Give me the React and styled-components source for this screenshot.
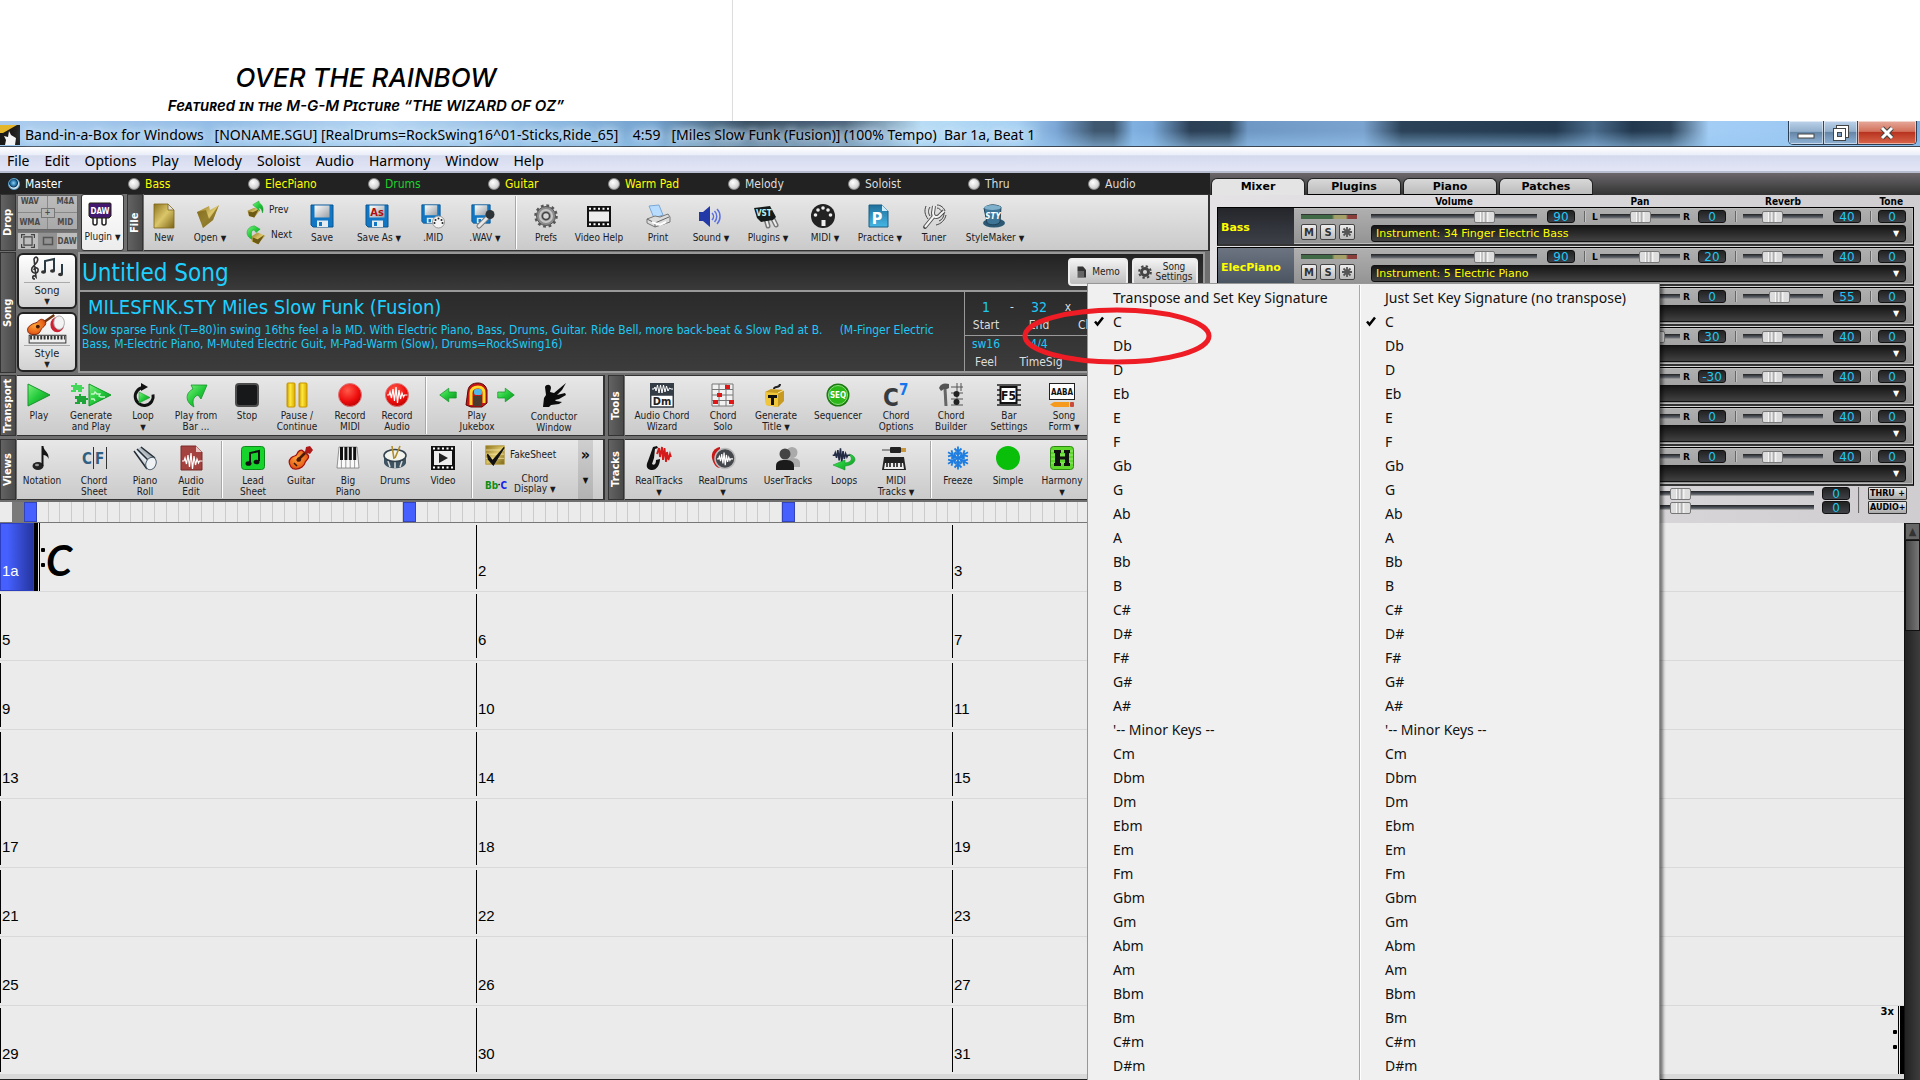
import React from "react";
import styled, { createGlobalStyle } from "styled-components";

const GlobalStyle = createGlobalStyle`
  * {
    box-sizing: border-box;
  }
  body {
    background: #fff;
    margin: 0;
  }
  button, input, select {
    font: inherit;
    color: inherit;
    margin: 0;
  }
  button {
    background: none;
    border: 0;
    padding: 0;
  }
`;

const tahoma = `"DejaVu Sans Condensed", "DejaVu Sans", sans-serif`;
const verdana = `"DejaVu Sans", sans-serif`;
const segoe = `"Noto Sans", "Open Sans", sans-serif`;

/* ---------- page ---------- */

const Page = styled.div`
  display: flex;
  flex-direction: column;
  font-family: ${tahoma};
  height: 100vh;
  overflow: hidden;
  position: relative;
`;

const SheetHeader = styled.header`
  display: flex;
  flex: none;
  height: 121px;
`;

const SheetTitle = styled.div`
  align-items: center;
  border-right: 1px solid #ddd;
  display: flex;
  flex-direction: column;
  font-family: "Inter", sans-serif;
  font-style: italic;
  font-weight: 500;
  justify-content: flex-end;
  padding-bottom: 3px;
  width: 733px;
`;

const SongName = styled.h1`
  font-size: 26px;
  font-weight: 500;
  line-height: 32px;
  margin: 0;
`;

const SongCredit = styled.p`
  font-size: 15px;
  font-variant: small-caps;
  font-weight: 600;
  line-height: 24px;
  margin: 0;
`;

const TitleBar = styled.div`
  align-items: center;
  background:
    linear-gradient(180deg, rgba(255, 255, 255, 0) 40%, rgba(150, 200, 240, 0.55) 100%),
    linear-gradient(90deg, #a9cbee 0%, #8fbae6 12%, #b5d5f3 20%, #8db9e3 28%, #6fa0cf 34%, #31475c 39%, #47617c 44%,
      #b7dcf5 48%, #a5d0f3 53%, #7ba6d6 55%, #3f5870 57%, #3f5870 58%, #7fb0e0 59%, #7aa9d9 60%, #2b3f55 62%,
      #2d4459 64%, #6f98c4 65%, #7ba3cf 71%, #2b4258 73%, #233a50 81%, #4a6b8c 83%, #22384e 85%, #2b4258 87%,
      #a3cdf5 89%, #9bc8f3 94%, #7fb0e4 100%);
  border-bottom: 1px solid #3a4654;
  display: flex;
  flex: none;
  font-family: ${segoe};
  font-size: 14px;
  height: 26px;
  justify-content: space-between;
`;

const TitleText = styled.div`
  align-items: center;
  display: flex;
  gap: 5px;
  padding-top: 2px;
  text-shadow: 0 0 6px #cfe6fa, 0 0 10px #cfe6fa, 0 0 14px #cfe6fa, 0 0 18px #cfe6fa;
  white-space: pre;
`;

const WindowButtons = styled.div`
  align-self: flex-start;
  border: 1px solid #2d3f54;
  border-radius: 0 0 5px 5px;
  border-top: 0;
  display: flex;
  margin-right: 3px;
  overflow: hidden;
`;

const WindowButton = styled.button`
  align-items: center;
  background: ${(p) =>
    p.$close
      ? "linear-gradient(#e6a99b 0%, #d2725c 45%, #b83420 50%, #d9664a 100%)"
      : "linear-gradient(#bcd3ea 0%, #93afcc 45%, #6686a8 50%, #8fb2d4 100%)"};
  border-left: ${(p) => (p.$first ? "0" : "1px solid #34475c")};
  box-shadow: inset 0 0 0 1px rgba(255, 255, 255, 0.5);
  display: flex;
  height: 23px;
  justify-content: center;
  width: ${(p) => (p.$close ? "59px" : "34px")};
`;

const MenuBar = styled.nav`
  align-items: center;
  background: linear-gradient(#fff 0%, #e9edf8 34%, #d5daed 36%, #e0e4f5 90%);
  border-bottom: 2px solid #b9bdd0;
  display: flex;
  flex: none;
  font-family: ${segoe};
  font-size: 14px;
  gap: 15px;
  height: 26px;
  padding: 2px 7px 0;
`;

const Workspace = styled.div`
  display: flex;
  flex: none;
`;

const Left = styled.div`
  background: #6f6f6f;
  display: flex;
  flex: 1;
  flex-direction: column;
  min-width: 0;
`;

/* ---------- track selector ---------- */

const TrackBar = styled.div`
  background: #222;
  display: grid;
  grid-template-columns: repeat(9, 120px) 1fr;
  height: 21px;
  padding-left: 8px;
`;

const TrackLabel = styled.label`
  align-items: center;
  color: ${(p) => p.$color};
  display: flex;
  font-size: 12px;
  gap: 5px;
`;

const TrackRadio = styled.input`
  appearance: none;
  background: radial-gradient(circle at 40% 35%, #fff 0%, #ddd 50%, #aaa 100%);
  border: 1px solid #888;
  border-radius: 50%;
  height: 12px;
  width: 12px;

  &:checked {
    background: radial-gradient(circle at 45% 40%, #8fd0f5 0%, #2473a8 35%, #123b5c 50%, #d6e6f0 60%);
    border-color: #5fa3cc;
  }
`;

/* ---------- toolbars ---------- */

const ToolRow = styled.div`
  display: flex;
  gap: 1px;
  height: ${(p) => p.$height};
  margin-bottom: ${(p) => p.$gap};
`;

const SideLabel = styled.div`
  align-items: center;
  background: linear-gradient(90deg, #4a4a4a, #636363);
  border: 1px solid #333;
  color: #fff;
  display: flex;
  flex: none;
  font-family: ${verdana};
  font-size: 10px;
  font-weight: bold;
  justify-content: center;
  line-height: 14px;
  transform: rotate(180deg);
  width: 16px;
  writing-mode: vertical-rl;
`;

const Panel = styled.div`
  background: linear-gradient(#e8e8e8, #cacaca);
  border: 1px solid #333;
  border-left: 0;
  border-right: ${(p) => (p.$open ? "0" : "2px solid #333")};
  display: flex;
  flex: ${(p) => (p.$width ? "none" : 1)};
  margin-right: ${(p) => p.$after || "0"};
  min-width: 0;
  overflow: hidden;
  width: ${(p) => p.$width || "auto"};
`;

const ToolButton = styled.button`
  align-items: center;
  color: #1b1b1f;
  display: flex;
  flex: none;
  flex-direction: column;
  font-size: 10px;
  gap: ${(p) => p.$gap || "3px"};
  line-height: 11px;
  padding-top: ${(p) => p.$top || "7px"};
  text-align: center;
  white-space: pre-line;
  width: ${(p) => p.$w}px;
`;

const IconSlot = styled.span`
  display: flex;
  gap: 8px;
  height: 26px;
  align-items: center;
  padding-right: ${(p) => (p.$arrow ? "5px" : "0")};
`;

const Arrow = styled.span`
  font-size: 8px;
`;

const Separator = styled.div`
  background: #a8a8a8;
  border-right: 1px solid #fff;
  flex: none;
  margin: 1px ${(p) => p.$right || "4px"} 1px ${(p) => p.$left || "4px"};
  width: 2px;
`;

const SideBySide = styled.div`
  display: flex;
  flex: none;
  flex-direction: column;
  justify-content: space-between;
  padding: 4px 0;
  width: ${(p) => p.$w}px;
`;

const InlineTool = styled.button`
  align-items: center;
  color: #1b1b1f;
  display: flex;
  font-size: 10px;
  gap: 5px;
  line-height: 10px;
  min-height: 22px;
  padding-left: 10px;
  white-space: pre-line;
`;

const OverflowColumn = styled.button`
  align-items: center;
  background: linear-gradient(#cfcfcf, #b2b2b2);
  color: #111;
  display: flex;
  flex: none;
  flex-direction: column;
  font-size: 16px;
  gap: 8px;
  justify-content: center;
  line-height: 18px;
  padding-bottom: 4px;
  width: 15px;
`;

const DropPanel = styled.div`
  color: #4a4a4a;
  display: flex;
  flex: none;
  flex-direction: column;
  font-size: 8px;
  font-weight: bold;
  gap: 2px;
  padding: 1px 2px 1px 0;
  width: 63px;
`;

const DropTargets = styled.div`
  align-content: space-between;
  background:
    linear-gradient(#888, #888) center / 1px 100% no-repeat,
    linear-gradient(#888, #888) center / 100% 1px no-repeat,
    linear-gradient(#bcbcbc, #a9a9a9);
  border: 1px solid #666;
  display: grid;
  flex: 1;
  grid-template-columns: 1fr 14px 1fr;
  line-height: 10px;
  padding: 1px;
  text-align: center;
`;

const DropPlus = styled.div`
  background: #b4b4b4;
  border: 1px solid #777;
  grid-column: 2;
  line-height: 8px;
`;

const DropModes = styled.div`
  background: #a4a4a4;
  border: 1px solid #777;
  display: flex;
  height: 18px;
`;

const DropMode = styled.button`
  align-items: center;
  background: ${(p) => (p.$lit ? "#bdbdbd" : "#929292")};
  display: flex;
  flex: 1;
  justify-content: center;
`;

const PluginButton = styled(ToolButton)`
  background: linear-gradient(#fff, #ececec);
  border: 1px solid #333;
  border-radius: 3px;
  margin-right: 2px;
  padding-top: 7px;
`;

/* ---------- song panel ---------- */

const SongButtons = styled.div`
  display: flex;
  flex: none;
  flex-direction: column;
  gap: 3px;
  padding: 1px 0;
  width: 60px;
`;

const SongButton = styled.button`
  align-items: center;
  background: linear-gradient(#fff, #d2d2d2);
  border: 2px solid #222;
  border-radius: 6px;
  color: #222;
  display: flex;
  flex: 1;
  flex-direction: column;
  font-size: 11px;
  justify-content: center;
  line-height: 11px;
`;

const SongRule = styled.hr`
  border: 0;
  border-top: 1px solid #aaa;
  margin: 2px 0;
  width: 46px;
`;

const SongScreen = styled.div`
  background: linear-gradient(#222, #3c3c3c);
  border: 2px solid #999;
  display: flex;
  flex: 1;
  flex-direction: column;
  margin-right: 5px;
  min-width: 0;
`;

const SongTitleRow = styled.div`
  align-items: center;
  background: linear-gradient(#222, #3a3a3a);
  border-bottom: 2px solid #999;
  display: flex;
  flex: none;
  gap: 4px;
  height: 38px;
  padding: 0 5px 0 2px;
`;

const SongTitle = styled.h2`
  color: #1fd0ff;
  flex: 1;
  font-size: 24px;
  font-weight: normal;
  line-height: 30px;
  margin: 2px 0 0;
`;

const SettingsButton = styled.button`
  align-items: center;
  background: linear-gradient(#f2f2f2, #bdbdbd);
  border: 2px solid #eee;
  border-radius: 4px;
  color: #222;
  display: flex;
  font-size: 10px;
  gap: 4px;
  height: 28px;
  justify-content: center;
  line-height: 10px;
  white-space: pre-line;
  width: ${(p) => p.$w};
`;

const SongInfoRow = styled.div`
  display: flex;
  flex: 1;
  min-height: 0;
`;

const StyleInfo = styled.div`
  color: #1fc8f4;
  flex: 1;
  font-size: 12px;
  line-height: 14px;
  padding: 3px 2px;
  white-space: pre-line;
`;

const StyleName = styled.h3`
  color: #1fd0ff;
  font-size: 20px;
  font-weight: normal;
  line-height: 24px;
  margin: 0 0 4px 6px;
`;

const Form = styled.div`
  border-left: 1px solid #999;
  display: flex;
  flex: none;
  flex-direction: column;
  width: 239px;
`;

const FormLine = styled.div`
  border-bottom: ${(p) => (p.$top ? "1px solid #999" : "0")};
  display: grid;
  flex: ${(p) => (p.$top ? "0 0 44px" : 1)};
  grid-template-columns: 42px 10px 44px 14px 44px 1fr;
  line-height: 16px;
  padding-top: ${(p) => (p.$top ? "7px" : "0")};
  text-align: center;
`;

const FormValue = styled.span`
  color: #1fc8f4;
  font-size: ${(p) => (p.$big ? "14px" : "12px")};
`;

const FormLabel = styled.span`
  color: #ddd;
  font-size: 12px;
  grid-column: ${(p) => p.$col || "auto"};
`;

/* ---------- ruler ---------- */

const Ruler = styled.div`
  background: #7a7a7a;
  border-bottom: 1px solid #777;
  display: flex;
  height: 21px;
`;

const RulerStart = styled.div`
  background: #ebebeb;
  margin-right: 12px;
  width: 12px;
`;

const RulerCell = styled.div`
  background: ${(p) => (p.$section ? "#4560ff" : "#ebebeb")};
  border: ${(p) => (p.$section ? "1px solid #3344bb" : "0 solid #cbcbcb")};
  border-right-width: 1px;
  flex: 1;
`;

/* ---------- mixer ---------- */

const Mixer = styled.aside`
  background: linear-gradient(90deg, #e4e2e4, #cfcdcf);
  color: #000;
  display: flex;
  flex: none;
  flex-direction: column;
  font-family: ${verdana};
  width: 710px;
`;

const Tabs = styled.div`
  align-items: flex-end;
  background: linear-gradient(#6b676b, #333);
  display: flex;
  gap: 2px;
  height: 22px;
  padding-left: 1px;
`;

const Tab = styled.button`
  background: ${(p) => (p.$active ? "#e4e4e4" : "linear-gradient(#d8d8d8, #bcbcbc)")};
  border: 1px solid #222;
  border-bottom: ${(p) => (p.$active ? "0" : "1px solid #000")};
  border-radius: 6px 6px 0 0;
  font-size: 11px;
  font-weight: bold;
  height: 17px;
  line-height: 14px;
  width: 94px;
`;

const ColumnHeads = styled.div`
  display: grid;
  font-family: ${tahoma};
  font-size: 10px;
  font-weight: bold;
  grid-template-columns: 154px 166px 63px 80px 63px 80px 1fr;
  height: 12px;
  line-height: 14px;
  padding: 0 17px 0 7px;
  text-align: center;
`;

const ToneHead = styled.span`
  text-align: right;
`;

const Strip = styled.div`
  background: linear-gradient(#b0b0b0, #939393);
  border: 1px solid #000;
  border-bottom: 2px solid #333;
  box-shadow: inset 0 0 0 1px #bbb;
  display: flex;
  height: 39px;
  margin: 0 6px 1px 7px;
`;

const StripName = styled.div`
  align-items: center;
  background: ${(p) => (p.$lit ? "linear-gradient(#6b7480, #4a5360)" : "linear-gradient(#24262b, #3d4048)")};
  color: #ff0;
  display: flex;
  font-size: 11px;
  font-weight: bold;
  padding: 2px 0 0 3px;
  width: 76px;
`;

const MeterCell = styled.div`
  display: flex;
  flex-direction: column;
  gap: 5px;
  padding: 6px 14px 0 7px;
  width: 77px;
`;

const Meter = styled.div`
  background: linear-gradient(90deg, #3f6a45 0 55%, #a3a06a 60% 80%, #8a3f3c 84%);
  border-top: 1px solid #333;
  height: 5px;
`;

const MeterButtons = styled.div`
  display: flex;
  gap: 3px;
`;

const MeterButton = styled.button`
  align-items: center;
  background: linear-gradient(#eee, #bbb);
  border: 1px solid #444;
  border-radius: 2px;
  color: #333;
  display: flex;
  font-size: 10px;
  font-weight: bold;
  height: 16px;
  justify-content: center;
  width: 16px;
`;

const StripControls = styled.div`
  display: flex;
  flex: 1;
  flex-direction: column;
  gap: 2px;
  padding: 2px 7px 0 0;
`;

const StripLine = styled.div`
  align-items: center;
  display: grid;
  grid-template-columns: 176px 37px 8px 8px 80px 18px 37px 8px 90px 37px 8px 28px;
`;

const Fader = styled.input`
  appearance: none;
  background: linear-gradient(transparent 4px, #222 4px, #555b66 7px, #777 8px, transparent 9px);
  flex: none;
  height: 13px;
  width: ${(p) => p.$w};

  &::-webkit-slider-thumb {
    appearance: none;
    background: linear-gradient(90deg, #ddd 0 25%, #fff 30%, #aaa 36%, #f5f5f5 46%, #aaa 56%, #f5f5f5 66%, #ddd 75% 100%);
    border: 1px solid #777;
    border-radius: 2px;
    height: 12px;
    width: 21px;
  }
`;

const Readout = styled.output`
  background: linear-gradient(#222, #3f4247);
  border: 1px solid #111;
  border-radius: 3px;
  color: #1fc8f4;
  font-size: 12px;
  height: 13px;
  line-height: 12px;
  text-align: center;
  width: 28px;
`;

const Tick = styled.span`
  background: #666;
  border-right: 1px solid #c4c4c4;
  height: ${(p) => p.$tall || "11px"};
  width: 2px;
`;

const PanMark = styled.span`
  font-size: 9px;
  font-weight: bold;
  padding-left: ${(p) => p.$pad || "0"};
`;

const Instrument = styled.select`
  appearance: none;
  background: linear-gradient(#161616, #414141);
  border: 1px solid #111;
  border-radius: 3px;
  color: #ff0;
  font-size: 11px;
  height: 17px;
  line-height: 15px;
  padding: 0 4px;
  width: 100%;
`;

const InstrumentBox = styled.label`
  display: grid;
  grid-template-columns: 1fr 13px;

  & > select {
    grid-column: 1 / 3;
    grid-row: 1;
  }
`;

const InstrumentArrow = styled.span`
  color: #fff;
  font-size: 8px;
  grid-column: 2;
  grid-row: 1;
  line-height: 17px;
  pointer-events: none;
`;

const MixerFoot = styled.div`
  display: flex;
  gap: 8px;
  height: 36px;
  justify-content: flex-end;
  padding-right: 13px;
`;

const FootColumn = styled.div`
  display: flex;
  flex-direction: column;
  gap: 1px;
`;

const FootButton = styled.button`
  background: linear-gradient(#e8e8e8, #a9a9a9);
  border: 1px solid #333;
  border-radius: 1px;
  display: flex;
  font-size: 8px;
  font-weight: bold;
  height: 13px;
  justify-content: space-between;
  line-height: 12px;
  padding: 0 1px;
  white-space: nowrap;
  width: 39px;
`;

/* ---------- chord sheet ---------- */

const SheetArea = styled.main`
  background: #ebebeb;
  display: flex;
  flex: 1;
  min-height: 0;
`;

const Bars = styled.div`
  display: flex;
  flex: 1;
  flex-direction: column;
`;

const BarRow = styled.div`
  border-bottom: 1px solid #d9d9d9;
  display: grid;
  flex: none;
  grid-template-columns: repeat(4, 1fr);
  height: 69px;
`;

const Bar = styled.div`
  align-items: flex-end;
  border-left: 1px solid #000;
  display: flex;
  font-family: "Liberation Sans", sans-serif;
  font-size: 15px;
  justify-content: space-between;
  line-height: 18px;
  margin: 2px 0;
  padding: 0 0 9px 1px;
`;

const FirstBar = styled.div`
  display: flex;
`;

const BarNumber = styled.div`
  align-items: flex-end;
  background: linear-gradient(90deg, #4560ff 20%, #26359e);
  border: 1px solid #2c3fc0;
  color: #fff;
  display: flex;
  font-family: "Liberation Sans", sans-serif;
  font-size: 15px;
  line-height: 18px;
  padding: 0 0 10px 1px;
  width: 34px;
`;

const RepeatLines = styled.div`
  border-left: ${(p) => (p.$end ? "1px" : "4px")} solid #000;
  border-right: ${(p) => (p.$end ? "4px" : "1px")} solid #000;
  width: 6px;
`;

const RepeatDots = styled.div`
  display: flex;
  flex: none;
  flex-direction: column;
  gap: 11px;
  justify-content: center;
  padding: 0 1px;

  &::before,
  &::after {
    background: #000;
    border-radius: 1px;
    content: "";
    height: 4px;
    width: 4px;
  }
`;

const Chord = styled.span`
  align-self: center;
  font-family: "Lato", sans-serif;
  font-size: 42px;
  font-style: italic;
  font-weight: bold;
  line-height: 44px;
  padding-top: 6px;
`;

const EndRepeat = styled.div`
  align-self: stretch;
  display: flex;
  margin: -2px 0 -11px;
`;

const EndMarks = styled.div`
  align-items: flex-end;
  display: flex;
  flex-direction: column;
  gap: 14px;
`;

const RepeatCount = styled.span`
  font-family: ${verdana};
  font-size: 10px;
  font-weight: bold;
  height: 10px;
  line-height: 11px;
  padding-right: 4px;
`;

const SheetFoot = styled.div`
  background: #d9d9d9;
  border-bottom: 1px solid #222;
  flex: 1;
`;

const ScrollTrack = styled.div`
  background: linear-gradient(90deg, #222, #3d3d3d);
  border-left: 1px solid #111;
  flex: none;
  width: 16px;
`;

const ScrollUp = styled.button`
  background: #666;
  border: 1px solid #222;
  color: #333;
  display: block;
  font-size: 11px;
  height: 17px;
  line-height: 14px;
  width: 15px;
`;

const ScrollThumb = styled.div`
  background: linear-gradient(90deg, #444, #777);
  border: 1px solid #111;
  height: 91px;
`;

/* ---------- key menu ---------- */

const KeyMenu = styled.div`
  background: #f0f0f0;
  border: 1px solid #979797;
  box-shadow: 3px 3px 3px rgba(0, 0, 0, 0.5);
  display: flex;
  font-family: ${segoe};
  font-size: 14px;
  padding-top: 1px;
  position: absolute;
  right: 260px;
  top: 283px;
`;

const KeyColumn = styled.div`
  display: flex;
  flex-direction: column;
  padding-bottom: 8px;
  width: ${(p) => p.$w};

  & + & {
    border-left: 1px solid #a8a8a8;
    box-shadow: inset 1px 0 0 #fff;
  }
`;

const KeyItem = styled.button`
  align-items: center;
  color: #111;
  display: grid;
  grid-template-columns: 25px 1fr;
  height: 24px;
  text-align: left;
`;

const Check = styled.svg`
  grid-column: 1;
  margin-left: 5px;
`;

const KeyText = styled.span`
  grid-column: 2;
`;

const Ellipse = styled.svg`
  left: -68px;
  pointer-events: none;
  position: absolute;
  top: 21px;
`;

/* ---------- icons ---------- */

const IconSvg = styled.svg`
  flex: none;
  overflow: visible;
`;

const Defs = () => (
  <svg width="0" height="0" aria-hidden="true">
    <defs>
      <linearGradient id="green" x1="0" y1="0" x2="1" y2="1">
        <stop offset="0" stopColor="#7df27d" />
        <stop offset="0.5" stopColor="#22c93a" />
        <stop offset="1" stopColor="#128a22" />
      </linearGradient>
      <linearGradient id="gold" x1="0" y1="0" x2="1" y2="1">
        <stop offset="0" stopColor="#8d7420" />
        <stop offset="0.5" stopColor="#dcc66a" />
        <stop offset="1" stopColor="#7a6416" />
      </linearGradient>
      <linearGradient id="silver" x1="0" y1="0" x2="1" y2="1">
        <stop offset="0" stopColor="#fff" />
        <stop offset="1" stopColor="#9aa0a6" />
      </linearGradient>
      <linearGradient id="yellow" x1="0" y1="0" x2="1" y2="0">
        <stop offset="0" stopColor="#c99a00" />
        <stop offset="0.4" stopColor="#ffe93c" />
        <stop offset="1" stopColor="#d9a800" />
      </linearGradient>
      <linearGradient id="steel" x1="0" y1="1" x2="1" y2="0">
        <stop offset="0" stopColor="#3c4750" />
        <stop offset="0.45" stopColor="#e6ecf0" />
        <stop offset="1" stopColor="#39434c" />
      </linearGradient>
      <radialGradient id="red" cx="0.4" cy="0.3" r="0.8">
        <stop offset="0" stopColor="#ff5a4a" />
        <stop offset="0.6" stopColor="#ee0d0d" />
        <stop offset="1" stopColor="#a00" />
      </radialGradient>
      <radialGradient id="wood" cx="0.4" cy="0.4" r="0.8">
        <stop offset="0" stopColor="#ffa53c" />
        <stop offset="0.6" stopColor="#e8631a" />
        <stop offset="1" stopColor="#8b2508" />
      </radialGradient>
      <linearGradient id="page" x1="0" y1="0" x2="0" y2="1">
        <stop offset="0" stopColor="#1f6f9a" />
        <stop offset="1" stopColor="#45b7e6" />
      </linearGradient>
    </defs>
  </svg>
);

const Floppy = ({ s = 24 }) => (
  <g transform={`scale(${s / 24})`}>
    <path d="M1 1h22v22H3l-2-2z" fill="#1177c4" stroke="#0b5590" />
    <path d="M4.500 1.500h15v12h-15z" fill="url(#silver)" />
    <path d="M7 16.500h11v6.500H7z" fill="#e4ecf2" />
    <path d="M9 18h3v4H9z" fill="#1177c4" />
  </g>
);

const wave = "M2 12h2l1-3 1.500 6 1.500-9 1.500 12 1.500-14 1.500 16 1.500-13 1.500 9 1.500-6 1.500 4 1-2h3";

const GuitarShape = () => (
  <>
    <path d="M12 12l8-8" stroke="#6b3410" strokeWidth="3" />
    <path d="M16 6l1-5 4-1 3 4-3 4z" fill="#b01818" />
    <path
      d="M2 12c3-3 5-1 6-4s4-5 6-3l5 4c2 2 0 4-2 6s0 3-4 6-9 3-11 0-3-6 0-9z"
      fill="url(#wood)"
      stroke="#a11212"
      strokeWidth="1.200"
    />
    <path d="M8 15l8-8" stroke="#4a1906" strokeWidth="2.500" />
    <circle cx="10" cy="13.500" r="2.200" fill="#4a1906" />
    <path d="M5 17l3 3" stroke="#3a1404" strokeWidth="1.500" />
  </>
);

const keySlots = [4, 8.4, 12.8, 17.2];

const shapes = {
  plugin: (
    <>
      <path d="M5 13v7a2 2 0 0 0 4 0v-7M14 13v7a2 2 0 0 0 4 0v-7" fill="#fff" stroke="#222" strokeWidth="1.500" />
      <path d="M2 0h20a1 1 0 0 1 1 1v12l-2 2H3l-2-2V1a1 1 0 0 1 1-1z" fill="#43166f" stroke="#221" />
      <text x="12" y="11" textAnchor="middle" fontSize="8" fontWeight="bold" fill="#fff">DAW</text>
    </>
  ),
  new: <path d="M2 0h14l6 6v18H2zM16 0v6h6" fill="url(#gold)" stroke="#7d6618" strokeWidth="0.800" />,
  open: (
    <>
      <path d="M1 8L13 2l1 4 9-5-6 15L7 24z" fill="url(#gold)" />
      <path d="M1 8l9-2 3 9 10-14-6 15L7 24z" fill="#7c681c" opacity="0.75" />
    </>
  ),
  prev: (
    <>
      <path d="M2 13l9-4 8 3-8 10-7-2z" fill="url(#gold)" />
      <path d="M3 14l6 1 8-4-6 11-7-2z" fill="#6d5a14" />
      <path d="M9 5l8-5 1 3c4 2 6 7 4 13-1-5-3-7-5-7l1 4z" fill="url(#green)" stroke="#13a52a" strokeWidth="0.600" />
    </>
  ),
  next: (
    <>
      <path d="M6 14l8-5 9 4-9 10-7-3z" fill="url(#gold)" />
      <path d="M8 15l6 2 8-5-7 11-7-3z" fill="#6d5a14" />
      <path d="M12 9l-2-3C6 6 6 10 7 17 0 14-1 6 6 2l4-1 7 4z" fill="url(#green)" stroke="#13a52a" strokeWidth="0.600" />
    </>
  ),
  save: <Floppy />,
  saveAs: (
    <>
      <Floppy />
      <text x="12" y="12" textAnchor="middle" fontSize="11" fontWeight="bold" fill="#b01010">As</text>
    </>
  ),
  mid: (
    <>
      <Floppy s={20} />
      <circle cx="17.500" cy="18" r="6" fill="#f4f4f4" stroke="#999" />
      <g fill="#222">
        <circle cx="13.500" cy="19" r="1" /><circle cx="14.500" cy="16" r="1" /><circle cx="17.500" cy="14.500" r="1" />
        <circle cx="20.500" cy="16" r="1" /><circle cx="21.500" cy="19" r="1" />
      </g>
    </>
  ),
  wav: (
    <>
      <Floppy s={20} />
      <path d="M8 22L18 12" stroke="#777" strokeWidth="5" strokeLinecap="round" />
      <path d="M8 22L18 12" stroke="#e8e8e8" strokeWidth="3" strokeLinecap="round" />
      <circle cx="19" cy="10.500" r="4.500" fill="#2e3338" />
    </>
  ),
  prefs: (
    <>
      <circle cx="12" cy="12" r="10.500" fill="none" stroke="#555" strokeWidth="2.500" strokeDasharray="2.750 2.750" />
      <circle cx="12" cy="12" r="9.500" fill="#8c8c8e" stroke="#555" />
      <circle cx="12" cy="12" r="6" fill="none" stroke="#c6c6c6" strokeWidth="2" />
      <circle cx="12" cy="12" r="3.500" fill="#d5d5d5" stroke="#444" strokeWidth="1.500" />
    </>
  ),
  film: (
    <>
      <rect x="0" y="2" width="24" height="21" fill="#111" />
      <rect x="2" y="7.500" width="20" height="10" fill="#eee" />
      <path d="M2 4.750h20M2 20.250h20" stroke="#fff" strokeWidth="2" strokeDasharray="2 2.500" />
    </>
  ),
  video: (
    <>
      <rect x="0" y="0" width="24" height="24" fill="#111" />
      <rect x="3" y="5" width="18" height="14" fill="#eee" />
      <path d="M2 2.500h20M2 21.500h20" stroke="#fff" strokeWidth="2" strokeDasharray="2 2.500" />
      <path d="M8 7l9 5-9 5z" fill="#222" />
    </>
  ),
  print: (
    <>
      <path d="M3 2l10-1 4 10-9 3z" fill="#b7dcff" stroke="#7aa8d8" />
      <path d="M1 15l8-3 5 1 8-3 2 3v5L9 23l-8-4z" fill="#dcdcdc" stroke="#777" />
      <path d="M1 15l8 4 14-6M9 19v4" fill="none" stroke="#666" />
      <path d="M6 18l8 3 6-3" fill="none" stroke="#fff" strokeWidth="2" />
    </>
  ),
  sound: (
    <>
      <path d="M2 8h4l7-6v21l-7-6H2z" fill="#2439a8" />
      <path d="M15 9c2 2 2 5 0 7M17.500 7c3 3 3 8 0 11M20 5c4 4 4 11 0 15" fill="none" stroke="#5b6fe0" strokeWidth="1.500" />
    </>
  ),
  vst: (
    <>
      <path d="M12 15l2 7M18 13l4 8" stroke="#777" strokeWidth="5" strokeLinecap="round" />
      <path d="M12 15l2 7M18 13l4 8" stroke="#eee" strokeWidth="2" strokeLinecap="round" />
      <path d="M0 4l16-2 6 11-3 3-12 2-4-4z" fill="#151a1a" />
      <text x="2" y="12" fontSize="8" fontWeight="bold" fill="#bff0ec">VST</text>
    </>
  ),
  midi: (
    <>
      <circle cx="12" cy="12" r="12" fill="#222" />
      <g fill="#eee">
        <circle cx="4.500" cy="11" r="1.800" /><circle cx="7" cy="6" r="1.800" /><circle cx="12" cy="4" r="1.800" />
        <circle cx="17" cy="6" r="1.800" /><circle cx="19.500" cy="11" r="1.800" />
        <rect x="10.500" y="16" width="4" height="6" />
      </g>
    </>
  ),
  practice: (
    <>
      <path d="M3 1h13l6 6v16H3z" fill="url(#page)" stroke="#1b5f85" />
      <path d="M16 1v6h6z" fill="#cfeefc" />
      <text x="11" y="20" textAnchor="middle" fontSize="16" fontWeight="bold" fill="#fff">P</text>
    </>
  ),
  tuner: (
    <>
      <path d="M3 23l9-11" stroke="#555" strokeWidth="4" strokeLinecap="round" />
      <path d="M12 2l-1 7c0 4 3 5 6 3l5-5" fill="none" stroke="#555" strokeWidth="4" />
      <path d="M3 23l9-11M12 2l-1 7c0 4 3 5 6 3l5-5" fill="none" stroke="#f4f4f4" strokeWidth="2" />
      <path d="M15 1c4 0 7 3 8 6M15 4c2 0 4 2 5 4M17 17c3-1 5-4 5-8M14 21c5-1 9-5 10-10M8 3C6 6 6 9 8 12M4 2c-2 5-1 9 2 13" fill="none" stroke="#444" />
    </>
  ),
  hat: (
    <>
      <ellipse cx="13" cy="19" rx="11" ry="4.500" fill="#2c5874" />
      <path d="M3 4l3 15c4 3 11 2 13-1l1-15c-5-3-13-3-17 1z" fill="#3e7596" stroke="#1f4257" />
      <ellipse cx="11.500" cy="3.500" rx="8.500" ry="2.500" fill="#7fb0cb" />
      <text x="12" y="15" textAnchor="middle" fontSize="8" fontWeight="bold" fontStyle="italic" fill="#fff">STY</text>
    </>
  ),
  play: <path d="M1 1l22 11L1 23z" fill="url(#green)" stroke="#14952a" />,
  generate: (
    <>
      <path d="M18 1l22 11-22 11z" fill="url(#green)" stroke="#14952a" />
      <path d="M20 11h3l1-2 2 2h3l-1 2 2 1h4M20 16h3l1 2" fill="none" stroke="#c9f7cc" strokeWidth="1.400" />
      <path d="M0 2h4v-2h2v2h5v2h2v2h-2v3H7V7H5v2H0V7h2V4H0z" fill="#44d85a" />
      <path d="M4 13h4v-2h2v2h5v2h2v2h-2v4h-4v-2h-2v2H4v-2h2v-3H4z" fill="#1fa437" />
    </>
  ),
  loop: (
    <>
      <path d="M12 4.500a9 9 0 1 0 10 7" fill="none" stroke="#111" strokeWidth="3" />
      <path d="M10 0l7 4-7 4z" fill="#111" />
      <path d="M8 9l11 5.500L8 20z" fill="url(#green)" stroke="#14952a" strokeWidth="0.600" />
    </>
  ),
  playFrom: (
    <path d="M7 2l16 0-6 14-3-4c-5 2-6 6-4 12C1 19 1 10 9 6z" fill="url(#green)" stroke="#14952a" strokeWidth="0.800" />
  ),
  stop: <rect x="1" y="1" width="22" height="22" rx="3" fill="#17181a" stroke="#4c4c4c" strokeWidth="2" />,
  pause: (
    <>
      <rect x="2" y="0" width="8" height="24" rx="1" fill="url(#yellow)" stroke="#c79500" />
      <rect x="14" y="0" width="8" height="24" rx="1" fill="url(#yellow)" stroke="#c79500" />
    </>
  ),
  record: <circle cx="12" cy="12" r="11.500" fill="url(#red)" stroke="#d77" />,
  recordAudio: (
    <>
      <circle cx="12" cy="12" r="11.500" fill="url(#red)" stroke="#d77" />
      <path d={wave} fill="none" stroke="#fff" strokeWidth="1.200" />
    </>
  ),
  arrowLeft: <path d="M1 12L13 3v5h10v8H13v5z" fill="url(#green)" stroke="#14952a" />,
  arrowRight: <path d="M23 12L11 3v5H1v8h10v5z" fill="url(#green)" stroke="#14952a" />,
  jukebox: (
    <>
      <path d="M1 22L3 7c1-5 5-7 10-7s8 3 9 7v13l-5 4H6z" fill="#c31515" stroke="#5b0808" />
      <path d="M6 22V10c0-4 3-6 7-6s6 2 6 6v10" fill="none" stroke="#ffd82b" strokeWidth="3" />
      <rect x="9" y="6" width="8" height="6" rx="2" fill="#4fb8e8" />
      <rect x="8" y="13" width="9" height="10" fill="#4a3a30" />
    </>
  ),
  conductor: (
    <path
      d="M3 4c1-3 6-3 6 1L8 9l4 1 6-5 6-5-4 7-5 5 8-2 1 2-7 4-4 1 1 1 6 1-3 2-8 1-2 2H1l1-9 2-3z"
      fill="#0b0b0b"
    />
  ),
  note: (
    <>
      <ellipse cx="8" cy="20" rx="5.500" ry="4" fill="#222" />
      <ellipse cx="7" cy="19" rx="2" ry="1.200" fill="#999" />
      <path d="M11.500 20V0h2c0 5 6 6 5 13-1-3-3-4-5-4v11z" fill="#151515" />
    </>
  ),
  chordSheet: (
    <>
      <text x="0" y="18" fontSize="15" fontWeight="bold" fill="#2f5f83">C</text>
      <text x="13" y="18" fontSize="15" fontWeight="bold" fill="#2f5f83">F</text>
      <path d="M11.500 1v22M24.500 1v22" stroke="#333" />
    </>
  ),
  roll: (
    <>
      <path d="M1 5l7-4 15 12-7 10z" fill="url(#steel)" />
      <path d="M1 5l13 18M4 3l14 14M8 1l14 11" stroke="#222c36" strokeWidth="1.500" />
      <ellipse cx="18" cy="17.500" rx="5" ry="6.500" fill="#eef2f5" stroke="#4a5a68" transform="rotate(25 18 17.500)" />
    </>
  ),
  audioEdit: (
    <>
      <path d="M2 0h15l6 6v18H2z" fill="#a3423f" stroke="#7a2b29" />
      <path d="M17 0v6h6z" fill="#e9c4c2" />
      <path d={wave} transform="translate(1 3)" fill="none" stroke="#fff" strokeWidth="1.200" />
    </>
  ),
  leadSheet: (
    <>
      <rect x="0.500" y="0.500" width="23" height="23" rx="3" fill="#17d42d" stroke="#0d8a1b" />
      <path d="M9 17V7l9-2v10" fill="none" stroke="#111" strokeWidth="2" />
      <ellipse cx="7.500" cy="17.500" rx="3" ry="2.300" fill="#111" />
      <ellipse cx="15.500" cy="16" rx="3" ry="2.300" fill="#111" />
    </>
  ),
  guitar: <GuitarShape />,
  keys: (
    <>
      <path d="M3 1h18l2 21H1z" fill="#fafafa" stroke="#555" strokeWidth="0.600" />
      {keySlots.map((x) => (
        <g key={x}>
          <path d={`M${x + 1.4} 2v20`} stroke="#777" strokeWidth="0.700" />
          <rect x={x} y="1" width="3" height="13" fill="#111" />
        </g>
      ))}
    </>
  ),
  drum: (
    <>
      <path d="M1 10v7c2 7 20 7 22 0v-7z" fill="#3e5463" />
      <path d="M5 15l2 6M12 16v6M19 15l-2 6" stroke="#ddd" strokeWidth="1.500" />
      <ellipse cx="12" cy="9.500" rx="11" ry="6" fill="#f3f3ee" stroke="#32424e" strokeWidth="1.500" />
      <path d="M9 0l2 13M17 0l-5 12" stroke="#b08d2a" strokeWidth="1.600" />
    </>
  ),
  fake: (
    <>
      <rect x="1" y="1" width="22" height="22" fill="url(#gold)" stroke="#a98c2a" />
      <path d="M1 6h22M1 11h22M1 16h22" stroke="#fff2b8" strokeWidth="0.800" />
      <path d="M3 11l6 8L23 3 10 24 4 17z" fill="#111" stroke="#111" strokeWidth="1.500" />
    </>
  ),
  bbc: (
    <>
      <text x="0" y="18" fontSize="14" fontWeight="bold" fill="#0c8f14">Bb</text>
      <circle cx="20" cy="12" r="1.200" fill="#111" />
      <text x="22" y="18" fontSize="14" fontWeight="bold" fill="#1c1cf0">C</text>
    </>
  ),
  acw: (
    <>
      <rect x="0" y="0" width="24" height="12" fill="#343d45" />
      <path d="M2 6h2l1-2 1 4 1.500-6L9 10l1.500-8L12 10l1.500-8L15 9l1.500-6L18 8l1.500-3L21 6h2" fill="none" stroke="#fff" />
      <rect x="0.750" y="12" width="22.500" height="12" fill="#fff" stroke="#343d45" strokeWidth="1.500" />
      <text x="12" y="22" textAnchor="middle" fontSize="11" fontWeight="bold" fill="#222">Dm</text>
    </>
  ),
  solo: (
    <>
      <path d="M1 1h21v22H1zM8 1v22M15 1v22M1 6.500h21M1 12h21M1 17.500h21" fill="#f1f1f1" stroke="#777" />
      <path d="M14 2h5v4h-5zM6 10h5v4H6zM2 17h5v4H2zM18 17h5v4h-5z" fill="#e01616" />
    </>
  ),
  title: (
    <>
      <path d="M3 9l6-3 13 1v11l-6 6-12-2z" fill="#c89a20" />
      <path d="M3 9l13 1v14l-12-2z" fill="#f0c63c" />
      <path d="M16 10l6-3" stroke="#fff0a8" />
      <path d="M12 6c0-4 6 0 6-5" fill="none" stroke="#222" strokeWidth="2" />
      <path d="M6 12h9v3h-3v7H9v-7H6z" fill="#111" />
    </>
  ),
  seq: (
    <>
      <circle cx="12" cy="12" r="11.500" fill="#1b7a10" />
      <circle cx="12" cy="12" r="9.500" fill="#2db81a" stroke="#8be07c" />
      <text x="12" y="15" textAnchor="middle" fontSize="8" fontWeight="bold" fill="#fff">SEQ</text>
    </>
  ),
  c7: (
    <>
      <text x="-1" y="23" fontSize="24" fontWeight="bold" fill="#383c40">C</text>
      <text x="15" y="12" fontSize="15" fontWeight="bold" fill="#1277ee">7</text>
    </>
  ),
  builder: (
    <>
      <path d="M0 5c2-5 6-5 10-4v4l-2 1H5L2 8z" fill="#555" />
      <path d="M6 6l1 17" stroke="#666" strokeWidth="3" />
      <path d="M12 4h12M12 10h12M12 16h12M12 22h12M18 0v22M22 0v8" stroke="#555" />
      <circle cx="17.500" cy="11" r="3" fill="#222" /><circle cx="17.500" cy="19" r="3" fill="#222" />
    </>
  ),
  barSettings: (
    <>
      <path d="M0 2h24M0 7h24M0 12h24M0 17h24M0 22h24" stroke="#222" strokeWidth="1.500" />
      <rect x="3.500" y="4" width="16" height="16" fill="#fff" stroke="#111" strokeWidth="2" />
      <text x="11.500" y="17" textAnchor="middle" fontSize="12" fontWeight="bold" fill="#111">F5</text>
    </>
  ),
  form: (
    <>
      <rect x="-0.500" y="0.500" width="25" height="16" fill="#fff" stroke="#222" />
      <text x="12" y="12" textAnchor="middle" fontSize="8" fontWeight="bold" fill="#111">AABA</text>
      <path d="M0 21.500l4-2.500h15v5H4z" fill="#f59a1c" />
      <rect x="20" y="19" width="4" height="5" rx="1" fill="#cc4a3c" />
    </>
  ),
  realTracks: (
    <>
      <path d="M10 8l2-6 1 9 2-10 1 13 1.500-12 1.500 14 1-10 1.500 8 1.500-6 1 3" fill="none" stroke="#d41a1a" strokeWidth="1.800" />
      <path d="M6 1l4-1 1 2-3 1-1 9-2 6c3 2 4-1 4-4l4-1c0 6-4 12-9 11s-5-5-3-9z" fill="#111" />
    </>
  ),
  realDrums: (
    <>
      <path d="M9 1C3 2 0 7 1 12s4 10 8 10z" fill="#c81818" />
      <circle cx="14" cy="12.500" r="10" fill="#44484c" stroke="#bbb" strokeWidth="1.500" />
      <path d={wave} transform="translate(4.500 3.500) scale(0.780)" fill="none" stroke="#fff" strokeWidth="1.500" />
    </>
  ),
  users: (
    <>
      <circle cx="16" cy="6.500" r="5.500" fill="#aaa" />
      <path d="M9 21v-4c0-4 3-5 7-5s8 1 8 5v4z" fill="#aaa" />
      <circle cx="9" cy="8" r="5.500" fill="#444" />
      <path d="M0 24v-4c0-5 4-6 9-6s9 1 9 6v4z" fill="#1b1b1b" />
    </>
  ),
  loops: (
    <>
      <path d={wave} transform="translate(-1 -1) scale(0.860)" fill="none" stroke="#222a44" strokeWidth="1.800" />
      <path d="M17 8c9 2 8 11-4 12v4L1 19l12-5v3c7-1 8-4 4-9z" fill="url(#green)" stroke="#14952a" strokeWidth="0.600" />
    </>
  ),
  midiTracks: (
    <>
      <path d="M0 4h9" stroke="#777" strokeWidth="1.500" />
      <rect x="8" y="1" width="11" height="6" rx="1" fill="#222" />
      <rect x="19" y="2" width="5" height="4" fill="#c8963c" />
      <path d="M2 11h20l2 13H0z" fill="#222" />
      <path d="M3 17h18l1 6H2z" fill="#eee" />
      <path d="M5 17v4M8 17v4M12 17v4M15 17v4M19 17v4" stroke="#111" strokeWidth="1.500" />
    </>
  ),
  freeze: (
    <g stroke="#1d7de0" strokeWidth="1.800" fill="none">
      {[0, 60, 120, 180, 240, 300].map((a) => (
        <path key={a} d="M12 12V0.500M8.500 2.500L12 6l3.500-3.500M9 6l3 3 3-3" transform={`rotate(${a} 12 12)`} />
      ))}
    </g>
  ),
  simple: <circle cx="12" cy="12" r="12" fill="#0abf0a" />,
  harmony: (
    <>
      <rect x="0.500" y="0.500" width="23" height="23" rx="3" fill="#5fd82e" stroke="#2c8a10" />
      <path d="M1 5h22M1 9h22M1 13h22M1 17h22" stroke="#a9f08a" strokeWidth="0.800" />
      <path d="M4 4h7v3h-1v3.500h5V7h-1V4h6v3h-1v10h1v3h-6v-3h1v-3.500h-5V17h1v3H4v-3h1V7H4z" fill="#111" />
    </>
  ),
  songNotes: (
    <>
      <path d="M5 23c-3 0-3-4 0-3l1 1-2-18c2-4 5-1 3 3l-5 6c-2 5 5 7 6 3s-4-4-4-1" fill="none" stroke="#333" strokeWidth="1.600" />
      <path d="M15 16V5l9-2v12M32 18V8" fill="none" stroke="#2a3a44" strokeWidth="2" />
      <ellipse cx="13.500" cy="16" rx="2.500" ry="1.800" fill="#333" /><ellipse cx="22.500" cy="15" rx="2.500" ry="1.800" fill="#333" />
      <ellipse cx="30.500" cy="18.500" rx="2.500" ry="1.800" fill="#333" />
    </>
  ),
  band: (
    <>
      <path d="M14 10L27 1" stroke="#6b3410" strokeWidth="2.500" />
      <path d="M2 12c3-3 7-2 9-5s6-1 7 1-1 5-3 6-2 6-6 7-8 0-9-2-1-5 2-7z" fill="url(#wood)" stroke="#8b2508" />
      <circle cx="10" cy="13" r="2" fill="#4a1906" />
      <ellipse cx="30" cy="11" rx="7" ry="8" fill="#cc2233" /><ellipse cx="32" cy="9" rx="5.500" ry="7" fill="#f3f3f3" stroke="#aaa" />
      <rect x="1" y="22" width="38" height="8" fill="#eee" stroke="#333" />
      <path d="M2 24.500h36" stroke="#333" strokeWidth="4" strokeDasharray="2 1.500" />
    </>
  ),
  memo: (
    <>
      <path d="M3 1h11l6 7v15H3z" fill="#333" />
      <path d="M0 12h16M0 16h16M0 20h16" stroke="#ddd" strokeWidth="1.200" />
    </>
  ),
  gear: (
    <>
      <circle cx="12" cy="12" r="10" fill="none" stroke="#444" strokeWidth="3.500" strokeDasharray="4 3.850" />
      <circle cx="12" cy="12" r="6" fill="none" stroke="#444" strokeWidth="5" />
    </>
  ),
  expand: <path d="M1 7V1h6M17 1h6v6M23 17v6h-6M7 23H1v-6M5 5h14v14H5z" fill="none" stroke="#444" strokeWidth="2" />,
  square: <path d="M3 5h18v14H3z" fill="none" stroke="#555" strokeWidth="3" />,
};

const Icon = ({ name, height = 24, width = 24, vw = 24, vh = 24 }) => (
  <IconSvg width={width} height={height} viewBox={`0 0 ${vw} ${vh}`} fontFamily="DejaVu Sans Condensed, sans-serif">
    {shapes[name]}
  </IconSvg>
);

/* ---------- data ---------- */

const menus = ["File", "Edit", "Options", "Play", "Melody", "Soloist", "Audio", "Harmony", "Window", "Help"];

const tracks = [
  ["Master", "#fff"],
  ["Bass", "#ff0"],
  ["ElecPiano", "#ff0"],
  ["Drums", "#1fd02f"],
  ["Guitar", "#ff0"],
  ["Warm Pad", "#ff0"],
  ["Melody", "#ddd"],
  ["Soloist", "#ddd"],
  ["Thru", "#ddd"],
  ["Audio", "#ddd"],
];

const newOpenTools = [
  { icon: "new", text: "New", w: 40 },
  { icon: "open", text: "Open", w: 52, arrow: true },
];

const fileTools = [
  { icon: "save", text: "Save", w: 52 },
  { icon: "saveAs", text: "Save As", w: 62, arrow: true },
  { icon: "mid", text: ".MID", w: 46 },
  { icon: "wav", text: ".WAV", w: 58, arrow: true },
];

const appTools = [
  { icon: "prefs", text: "Prefs", w: 54 },
  { icon: "film", text: "Video Help", w: 52 },
  { icon: "print", text: "Print", w: 66 },
  { icon: "sound", text: "Sound", w: 40, arrow: true },
  { icon: "vst", text: "Plugins", w: 74, arrow: true },
  { icon: "midi", text: "MIDI", w: 40, arrow: true },
  { icon: "practice", text: "Practice", w: 70, arrow: true },
  { icon: "tuner", text: "Tuner", w: 38 },
  { icon: "hat", text: "StyleMaker", w: 84, arrow: true },
];

const transportTools = [
  { icon: "play", text: "Play", w: 44 },
  { icon: "generate", text: "Generate\nand Play", w: 60, iconWidth: 40 },
  { icon: "loop", text: "Loop\n", w: 44, arrow: true, centered: true },
  { icon: "playFrom", text: "Play from\nBar ...", w: 62 },
  { icon: "stop", text: "Stop", w: 40 },
  { icon: "pause", text: "Pause /\nContinue", w: 60 },
  { icon: "record", text: "Record\nMIDI", w: 46 },
  { icon: "recordAudio", text: "Record\nAudio", w: 48 },
];

const conductorTools = [{ icon: "conductor", text: "Conductor\nWindow", w: 62 }];

const songTools = [
  { icon: "acw", text: "Audio Chord\nWizard", w: 74 },
  { icon: "solo", text: "Chord\nSolo", w: 48 },
  { icon: "title", text: "Generate\nTitle", w: 58, arrow: true },
  { icon: "seq", text: "Sequencer", w: 66 },
  { icon: "c7", text: "Chord\nOptions", w: 50 },
  { icon: "builder", text: "Chord\nBuilder", w: 60 },
  { icon: "barSettings", text: "Bar\nSettings", w: 56 },
  { icon: "form", text: "Song\nForm", w: 54, arrow: true },
];

const viewTools = [
  { icon: "note", text: "Notation", w: 50 },
  { icon: "chordSheet", text: "Chord\nSheet", w: 54 },
  { icon: "roll", text: "Piano\nRoll", w: 48 },
  { icon: "audioEdit", text: "Audio\nEdit", w: 44 },
];

const instrumentViews = [
  { icon: "leadSheet", text: "Lead\nSheet", w: 44 },
  { icon: "guitar", text: "Guitar", w: 52 },
  { icon: "keys", text: "Big\nPiano", w: 42 },
  { icon: "drum", text: "Drums", w: 52 },
  { icon: "video", text: "Video", w: 44 },
];

const trackTools = [
  { icon: "realTracks", text: "RealTracks\n", w: 68, arrow: true, centered: true },
  { icon: "realDrums", text: "RealDrums\n", w: 60, arrow: true, centered: true },
  { icon: "users", text: "UserTracks", w: 70 },
  { icon: "loops", text: "Loops", w: 42 },
  { icon: "midiTracks", text: "MIDI\nTracks", w: 62, arrow: true },
];

const trackModes = [
  { icon: "freeze", text: "Freeze", w: 46 },
  { icon: "simple", text: "Simple", w: 54 },
  { icon: "harmony", text: "Harmony\n", w: 54, arrow: true, centered: true },
];

const strips = [
  { name: "Bass", instrument: "Instrument: 34 Finger Electric Bass", pan: 0, reverb: 40 },
  { name: "ElecPiano", instrument: "Instrument: 5 Electric Piano", pan: 20, reverb: 40, lit: true },
  { name: "Drums", pan: 0, reverb: 55 },
  { name: "Guitar", pan: 30, reverb: 40 },
  { name: "Warm Pad", pan: -30, reverb: 40 },
  { name: "Melody", pan: 0, reverb: 40 },
  { name: "Soloist", pan: 0, reverb: 40 },
];

const majorKeys = ["C", "Db", "D", "Eb", "E", "F", "Gb", "G", "Ab", "A", "Bb", "B", "C#", "D#", "F#", "G#", "A#"];
const minorKeys = ["Cm", "Dbm", "Dm", "Ebm", "Em", "Fm", "Gbm", "Gm", "Abm", "Am", "Bbm", "Bm", "C#m", "D#m"];
const keyItems = [...majorKeys, "'-- Minor Keys --", ...minorKeys];

const barRows = Array.from({ length: 8 }, (_, r) => [1, 2, 3, 4].map((c) => r * 4 + c));
const rulerCells = Array.from({ length: 100 }, (_, i) => i);

/* ---------- parts ---------- */

function Tools({ items, gap, top }) {
  return items.map((t) => (
    <ToolButton key={t.text} $w={t.w} $gap={gap} $top={top}>
      <IconSlot $arrow={t.arrow && !t.centered}>
        <Icon name={t.icon} width={t.iconWidth || 24} vw={t.iconWidth || 24} />
      </IconSlot>
      <span>
        {t.text}
        {t.arrow && (
          <>
            {t.centered ? "" : " "}
            <Arrow>▼</Arrow>
          </>
        )}
      </span>
    </ToolButton>
  ));
}

function ChannelStrip({ strip }) {
  return (
    <Strip>
      <StripName $lit={strip.lit}>{strip.name}</StripName>
      <MeterCell>
        <Meter />
        <MeterButtons>
          <MeterButton>M</MeterButton>
          <MeterButton>S</MeterButton>
          <MeterButton aria-label="Freeze">
            <svg width="12" height="12" viewBox="0 0 12 12">
              <path d="M6 1v10M1 6h10M2.500 2.500l7 7M9.500 2.500l-7 7" stroke="#555" strokeWidth="1.800" />
            </svg>
          </MeterButton>
        </MeterButtons>
      </MeterCell>
      <StripControls>
        <StripLine>
          <Fader type="range" min="0" max="127" defaultValue="90" $w="166px" aria-label={`${strip.name} volume`} />
          <Readout>90</Readout>
          <Tick />
          <PanMark>L</PanMark>
          <Fader type="range" min="-64" max="63" defaultValue={strip.pan} $w="80px" aria-label={`${strip.name} pan`} />
          <PanMark $pad="3px">R</PanMark>
          <Readout>{strip.pan}</Readout>
          <Tick />
          <Fader type="range" min="0" max="127" defaultValue={strip.reverb} $w="80px" aria-label={`${strip.name} reverb`} />
          <Readout>{strip.reverb}</Readout>
          <Tick />
          <Readout>0</Readout>
        </StripLine>
        <InstrumentBox>
          <Instrument aria-label={`${strip.name} instrument`}>
            <option>{strip.instrument || ""}</option>
          </Instrument>
          <InstrumentArrow>▼</InstrumentArrow>
        </InstrumentBox>
      </StripControls>
    </Strip>
  );
}

function KeyList({ title, width }) {
  return (
    <KeyColumn $w={width} role="menu">
      <KeyItem role="menuitem">
        <KeyText>{title}</KeyText>
      </KeyItem>
      {keyItems.map((k) => (
        <KeyItem key={k} role="menuitem">
          {k === "C" && (
            <Check width="12" height="12" viewBox="0 0 12 12">
              <path d="M2 6.500l2.500 3L10 2.500" fill="none" stroke="#000" strokeWidth="2.500" />
            </Check>
          )}
          <KeyText>{k}</KeyText>
        </KeyItem>
      ))}
    </KeyColumn>
  );
}

export default function App() {
  return (
    <Page>
      <GlobalStyle />
      <SheetHeader>
        <SheetTitle>
          <SongName>OVER THE RAINBOW</SongName>
          <SongCredit>Featured in the M-G-M Picture “THE WIZARD OF OZ”</SongCredit>
        </SheetTitle>
      </SheetHeader>

      <TitleBar>
        <TitleText>
          <svg width="20" height="20" viewBox="0 0 20 20">
            <rect width="20" height="20" fill="#1b1a18" />
            <path d="M0 0h17L3 8H0z" fill="#e3b62c" />
            <path d="M9 6l2 4 5 3-1 7H5l1-5-2-4 4 1z" fill="#f5f5f5" />
          </svg>
          {"Band-in-a-Box for Windows   [NONAME.SGU] [RealDrums=RockSwing16^01-Sticks,Ride_65]    4:59   [Miles Slow Funk (Fusion)] (100% Tempo)  Bar 1a, Beat 1"}
        </TitleText>
        <WindowButtons>
          <WindowButton $first aria-label="Minimize">
            <svg width="18" height="16" viewBox="0 0 18 16">
              <rect x="1" y="9" width="16" height="4" fill="#fff" stroke="#444" />
            </svg>
          </WindowButton>
          <WindowButton aria-label="Restore">
            <svg width="18" height="18" viewBox="0 0 18 18">
              <rect x="4.500" y="1.500" width="12" height="12" fill="#fff" stroke="#444" />
              <rect x="1.500" y="4.500" width="12" height="12" fill="#fff" stroke="#444" />
              <rect x="5.500" y="8.500" width="4" height="4" fill="#7a9cc0" stroke="#444" />
            </svg>
          </WindowButton>
          <WindowButton $close aria-label="Close">
            <svg width="16" height="14" viewBox="0 0 16 14">
              <path d="M3 2l10 10M13 2L3 12" stroke="#444" strokeWidth="5" />
              <path d="M3 2l10 10M13 2L3 12" stroke="#fff" strokeWidth="3" />
            </svg>
          </WindowButton>
        </WindowButtons>
      </TitleBar>

      <MenuBar>
        {menus.map((m) => (
          <button key={m}>{m}</button>
        ))}
      </MenuBar>

      <Workspace>
        <Left>
          <TrackBar>
            {tracks.map(([name, color], i) => (
              <TrackLabel key={name} $color={color}>
                <TrackRadio type="radio" name="track" defaultChecked={i === 0} />
                {name}
              </TrackLabel>
            ))}
          </TrackBar>

          <ToolRow $height="57px" $gap="1px">
            <SideLabel>Drop</SideLabel>
            <DropPanel>
              <DropTargets>
                <span>WAV</span>
                <i />
                <span>M4A</span>
                <DropPlus>+</DropPlus>
                <i />
                <span>WMA</span>
                <i />
                <span>MID</span>
              </DropTargets>
              <DropModes>
                <DropMode $lit aria-label="Expand"><Icon name="expand" height={14} width={14} /></DropMode>
                <DropMode aria-label="Window"><Icon name="square" height={12} width={12} /></DropMode>
                <DropMode $lit>DAW</DropMode>
              </DropModes>
            </DropPanel>
            <PluginButton $w={43}>
              <IconSlot $arrow><Icon name="plugin" /></IconSlot>
              <span>Plugin <Arrow>▼</Arrow></span>
            </PluginButton>
            <SideLabel>File</SideLabel>
            <Panel>
              <Tools items={newOpenTools} top="8px" />
              <SideBySide $w={60}>
                <InlineTool><Icon name="prev" height={18} width={18} />Prev</InlineTool>
                <InlineTool><Icon name="next" height={20} width={20} />Next</InlineTool>
              </SideBySide>
              <Tools items={fileTools} top="8px" />
              <Separator $left="1px" $right="2px" />
              <Tools items={appTools} top="8px" />
            </Panel>
          </ToolRow>

          <ToolRow $height="121px" $gap="2px">
            <SideLabel>Song</SideLabel>
            <SongButtons>
              <SongButton>
                <Icon name="songNotes" width={34} vw={34} />
                <SongRule />
                Song
                <Arrow>▼</Arrow>
              </SongButton>
              <SongButton>
                <Icon name="band" height={29} width={39} vw={40} vh={30} />
                <SongRule />
                Style
                <Arrow>▼</Arrow>
              </SongButton>
            </SongButtons>
            <SongScreen>
              <SongTitleRow>
                <SongTitle>Untitled Song</SongTitle>
                <SettingsButton $w="60px"><Icon name="memo" height={12} width={12} />Memo</SettingsButton>
                <SettingsButton $w="66px"><Icon name="gear" height={14} width={14} />{"Song\nSettings"}</SettingsButton>
              </SongTitleRow>
              <SongInfoRow>
                <StyleInfo>
                  <StyleName>MILESFNK.STY Miles Slow Funk (Fusion)</StyleName>
                  {"Slow sparse Funk (T=80)in swing 16ths feel a la MD. With Electric Piano, Bass, Drums, Guitar. Ride Bell, more back-beat & Slow Pad at B. \u00a0\u00a0\u00a0 (M-Finger Electric\nBass, M-Electric Piano, M-Muted Electric Guit, M-Pad-Warm (Slow), Drums=RockSwing16)"}
                </StyleInfo>
                <Form>
                  <FormLine $top>
                    <FormValue $big>1</FormValue>
                    <FormLabel>-</FormLabel>
                    <FormValue $big>32</FormValue>
                    <FormLabel>x</FormLabel>
                    <FormValue $big>3</FormValue>
                    <span />
                    <FormLabel>Start</FormLabel>
                    <span />
                    <FormLabel>End</FormLabel>
                    <span />
                    <FormLabel>Chorus</FormLabel>
                  </FormLine>
                  <FormLine>
                    <FormValue>sw16</FormValue>
                    <span />
                    <FormValue>4/4</FormValue>
                    <span />
                    <span />
                    <span />
                    <FormLabel>Feel</FormLabel>
                    <FormLabel $col="2 / 5">TimeSig</FormLabel>
                  </FormLine>
                </Form>
              </SongInfoRow>
            </SongScreen>
          </ToolRow>

          <ToolRow $height="61px" $gap="3px">
            <SideLabel>Transport</SideLabel>
            <Panel $width="588px" $after="2px">
              <Tools items={transportTools} gap="2px" top="6px" />
              <Separator />
              <ToolButton $w={92} $gap="2px" $top="6px">
                <IconSlot>
                  <Icon name="arrowLeft" height={18} width={18} />
                  <Icon name="jukebox" />
                  <Icon name="arrowRight" height={18} width={18} />
                </IconSlot>
                {"Play\nJukebox"}
              </ToolButton>
              <Tools items={conductorTools} gap="3px" top="6px" />
            </Panel>
            <SideLabel>Tools</SideLabel>
            <Panel $open>
              <Tools items={songTools} gap="2px" top="6px" />
            </Panel>
          </ToolRow>

          <ToolRow $height="61px" $gap="2px">
            <SideLabel>Views</SideLabel>
            <Panel $width="588px" $after="2px">
              <Tools items={viewTools} gap="4px" top="5px" />
              <Separator $left="8px" $right="8px" />
              <Tools items={instrumentViews} gap="4px" top="5px" />
              <Separator $left="6px" $right="2px" />
              <SideBySide $w={103}>
                <InlineTool><Icon name="fake" height={20} width={20} /> FakeSheet</InlineTool>
                <InlineTool>
                  <Icon name="bbc" height={17} width={24} vw={34} />
                  <span>
                    {"Chord\nDisplay "}
                    <Arrow>▼</Arrow>
                  </span>
                </InlineTool>
              </SideBySide>
              <OverflowColumn aria-label="More views">
                <b>»</b>
                <Arrow>▼</Arrow>
              </OverflowColumn>
            </Panel>
            <SideLabel>Tracks</SideLabel>
            <Panel $open>
              <Tools items={trackTools} gap="4px" top="5px" />
              <Separator $left="3px" $right="3px" />
              <Tools items={trackModes} gap="4px" top="5px" />
            </Panel>
          </ToolRow>

          <Ruler>
            <RulerStart />
            {rulerCells.map((i) => (
              <RulerCell key={i} $section={i % 32 === 0} />
            ))}
          </Ruler>
        </Left>

        <Mixer>
          <Tabs>
            <Tab $active>Mixer</Tab>
            <Tab>Plugins</Tab>
            <Tab>Piano</Tab>
            <Tab>Patches</Tab>
          </Tabs>
          <ColumnHeads>
            <span />
            <span>Volume</span>
            <span />
            <span>Pan</span>
            <span />
            <span>Reverb</span>
            <ToneHead>Tone</ToneHead>
          </ColumnHeads>
          {strips.map((s) => (
            <ChannelStrip key={s.name} strip={s} />
          ))}
          <MixerFoot>
            <FootColumn>
              <Fader type="range" min="0" max="100" $w="267px" aria-label="Thru level" />
              <Fader type="range" min="0" max="100" $w="267px" aria-label="Audio level" />
            </FootColumn>
            <FootColumn>
              <Readout>0</Readout>
              <Readout>0</Readout>
            </FootColumn>
            <Tick $tall="26px" />
            <FootColumn>
              <FootButton><span>THRU</span><span>+</span></FootButton>
              <FootButton><span>AUDIO</span><span>+</span></FootButton>
            </FootColumn>
          </MixerFoot>
        </Mixer>
      </Workspace>

      <SheetArea>
        <Bars>
          {barRows.map((row) => (
            <BarRow key={row[0]}>
              {row.map((n) =>
                n === 1 ? (
                  <FirstBar key={n}>
                    <BarNumber>1a</BarNumber>
                    <RepeatLines />
                    <RepeatDots />
                    <Chord>C</Chord>
                  </FirstBar>
                ) : (
                  <Bar key={n}>
                    {n}
                    {n === 32 && (
                      <EndRepeat>
                        <EndMarks>
                          <RepeatCount>3x</RepeatCount>
                          <RepeatDots />
                        </EndMarks>
                        <RepeatLines $end />
                      </EndRepeat>
                    )}
                  </Bar>
                )
              )}
            </BarRow>
          ))}
          <SheetFoot />
        </Bars>
        <ScrollTrack>
          <ScrollUp aria-label="Scroll up">▲</ScrollUp>
          <ScrollThumb />
        </ScrollTrack>
      </SheetArea>

      <KeyMenu>
        <KeyList title="Transpose and Set Key Signature" width="271px" />
        <KeyList title="Just Set Key Signature (no transpose)" width="300px" />
        <Ellipse width="194" height="62" viewBox="0 0 194 62">
          <ellipse cx="97" cy="31" rx="92" ry="26" fill="none" stroke="#ee1c24" strokeWidth="5" />
        </Ellipse>
      </KeyMenu>
      <Defs />
    </Page>
  );
}
